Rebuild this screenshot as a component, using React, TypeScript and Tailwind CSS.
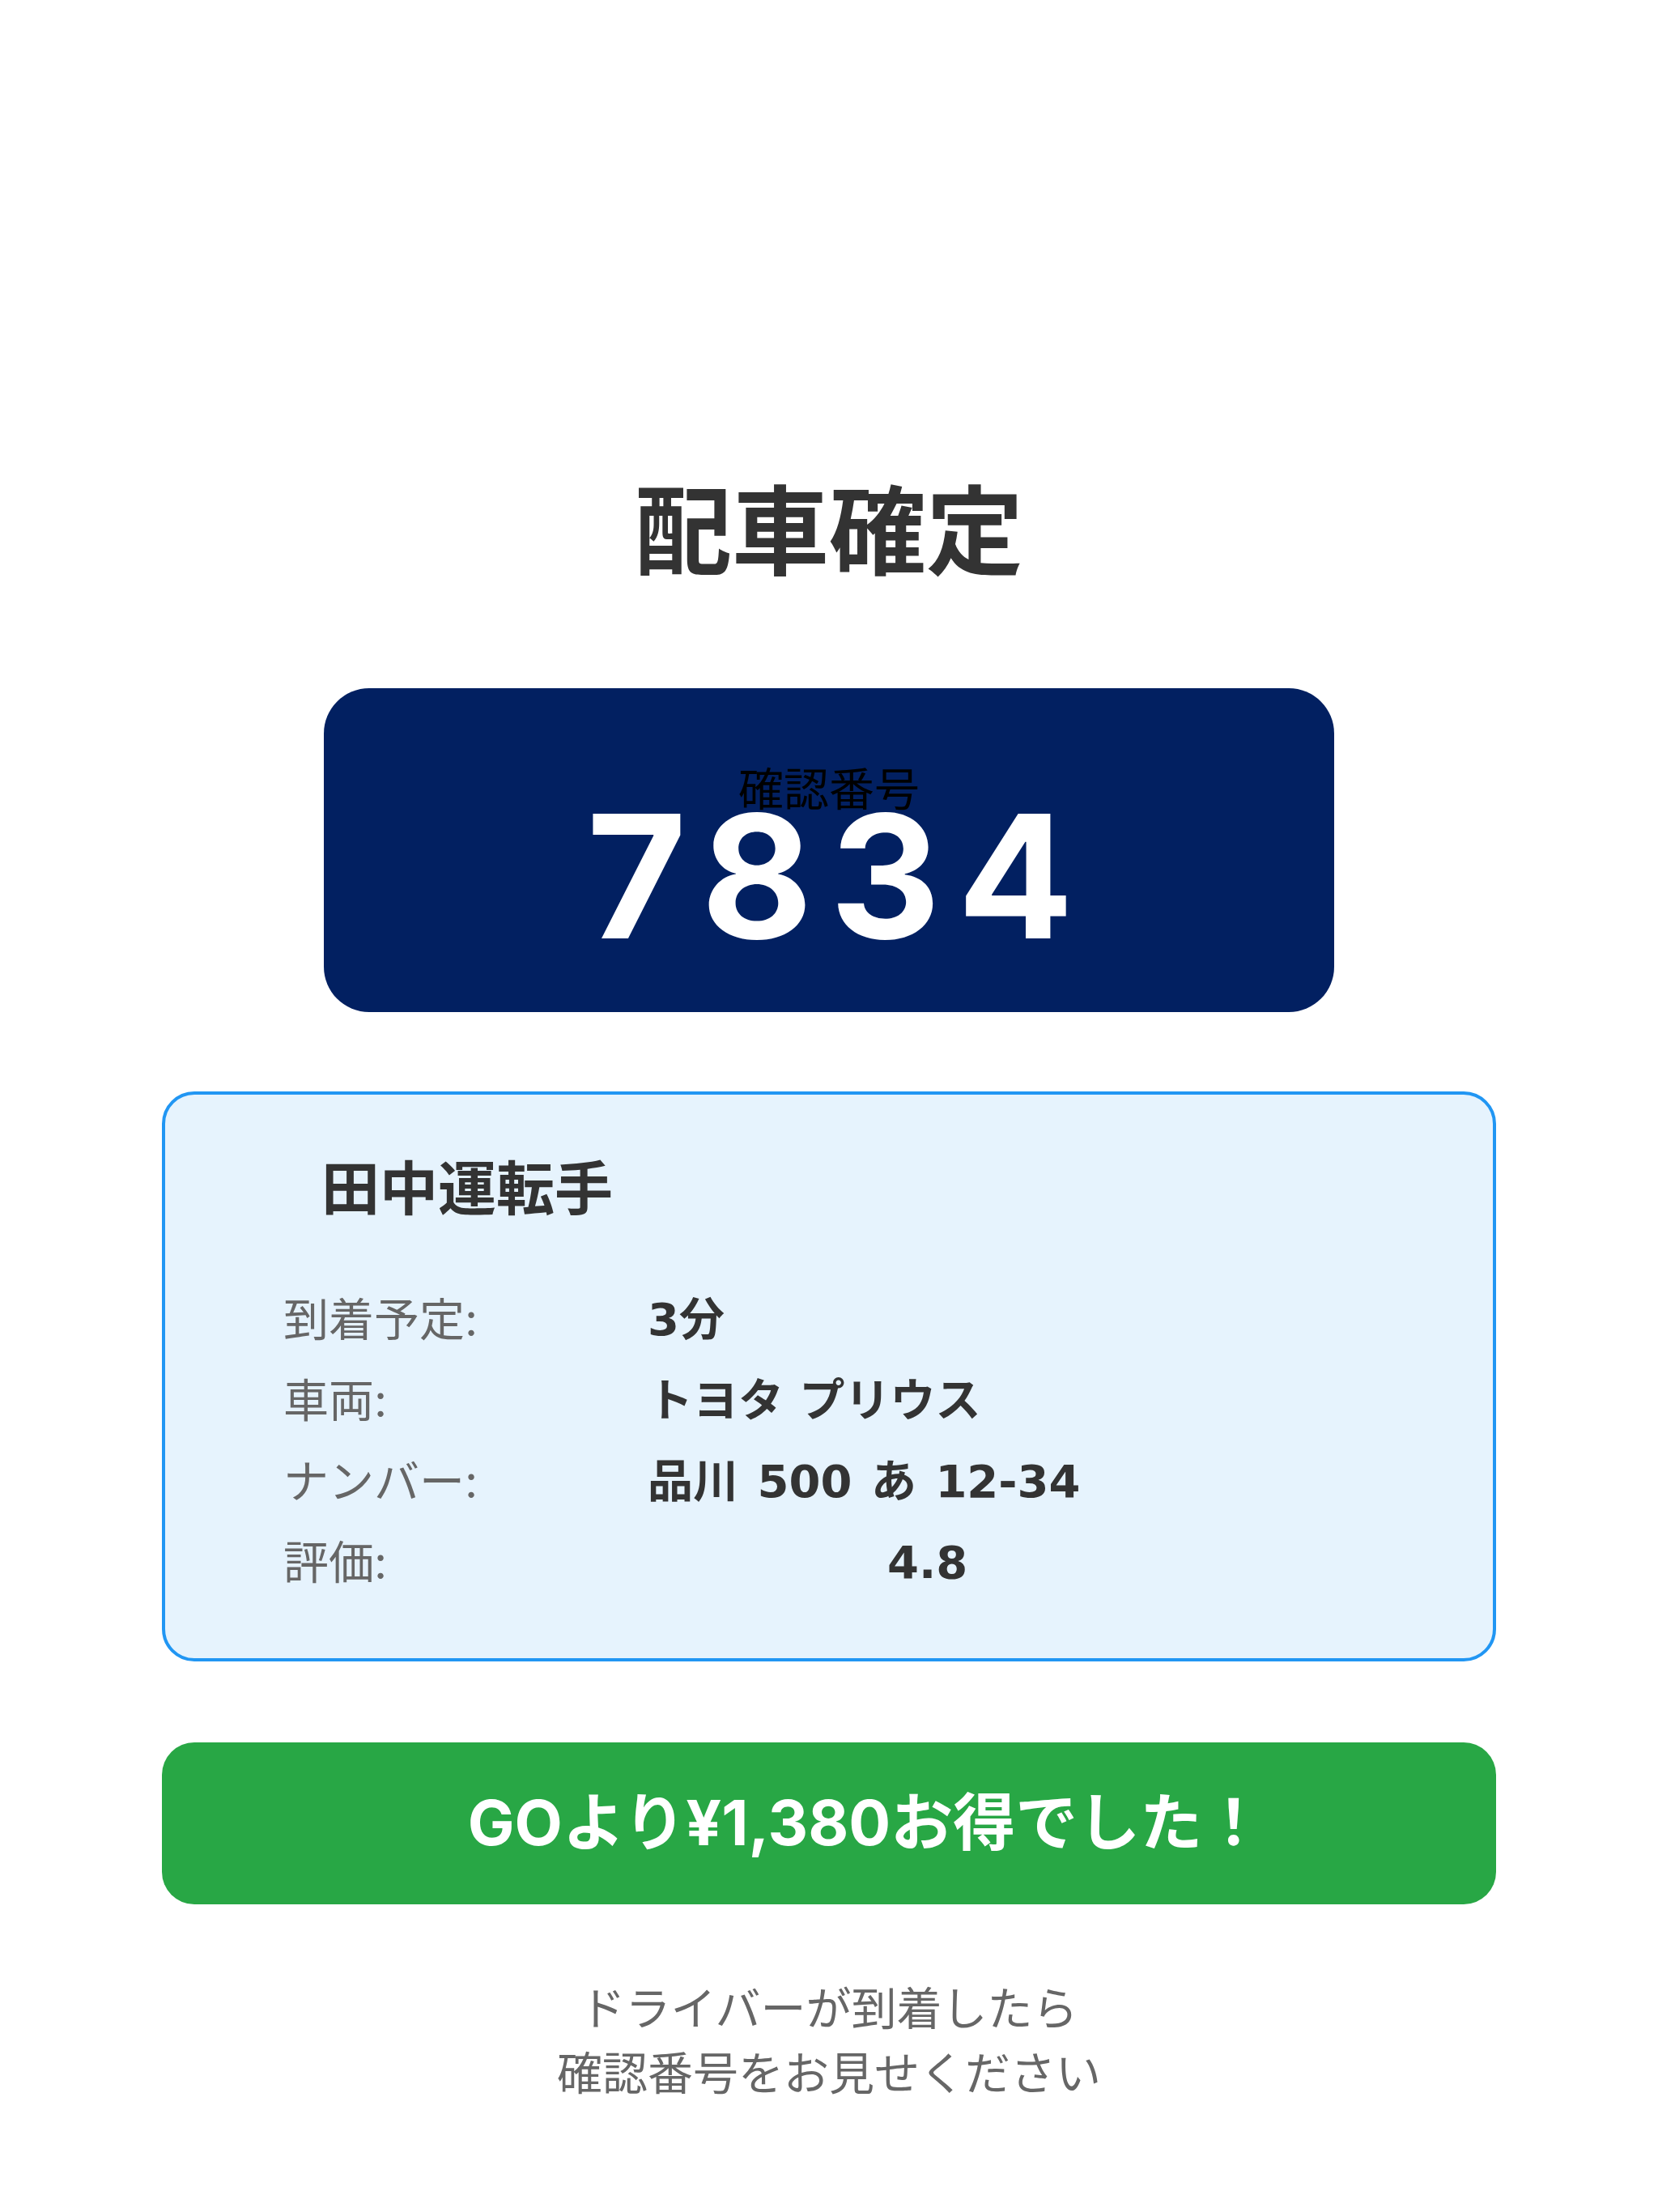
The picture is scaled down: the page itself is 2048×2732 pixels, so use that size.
import React from "react";

const rows: { label: string; value: string; extra?: string }[] = [
  { label: "到着予定:", value: "3分" },
  { label: "車両:", value: "トヨタ プリウス" },
  { label: "ナンバー:", value: "品川 500 あ 12-34", extra: "[word-spacing:4px]" },
  { label: "評価:", value: "4.8", extra: "ml-[296px]" },
];

export default function App() {
  return (
    <div className="min-h-[2732px] w-full bg-white flex flex-col items-center pt-[586px] font-['Inter','Noto_Sans_CJK_JP',sans-serif]">
      <h1 className="text-[120px] leading-[144px] font-bold text-[#333333]">配車確定</h1>

      {/* confirmation code */}
      <div className="mt-[120px] w-[1248px] h-[400px] rounded-[56px] bg-[#022061] flex flex-col items-center pt-[83px]">
        <div className="text-[56px] leading-[84px] text-black">確認番号</div>
        <div className="-mt-[41px] text-[212px] leading-none font-bold text-white tracking-[21px] pl-[24px]">
          7834
        </div>
      </div>

      {/* driver card */}
      <div className="mt-[98px] w-[1648px] rounded-[40px] border-4 border-[#2196f3] bg-[#e6f3fd] pt-[62px] pb-[68px] pl-[146px]">
        <div className="ml-[47px] text-[72px] leading-[108px] font-bold text-[#333333]">田中運転手</div>
        <div className="mt-[58px] flex flex-col">
          {rows.map((r) => (
            <div key={r.label} className="flex h-[100px] items-center text-[56px]">
              <span className="w-[450px] text-[#666666]">{r.label}</span>
              <span
                className={`font-bold text-[#333333] font-['DejaVu_Sans','Noto_Sans_CJK_JP',sans-serif] ${r.extra ?? ""}`}
              >
                {r.value}
              </span>
            </div>
          ))}
        </div>
      </div>

      <div className="mt-[100px] w-[1648px] h-[200px] rounded-[40px] bg-[#28a745] flex items-center justify-center pl-[92px]">
        <span className="text-[77px] font-bold text-white">GOより¥1,380お得でした！</span>
      </div>

      <p className="mt-[89px] text-center text-[56px] leading-[80px] text-[#666666]">
        ドライバーが到着したら
        <br />
        確認番号をお見せください
      </p>
    </div>
  );
}
